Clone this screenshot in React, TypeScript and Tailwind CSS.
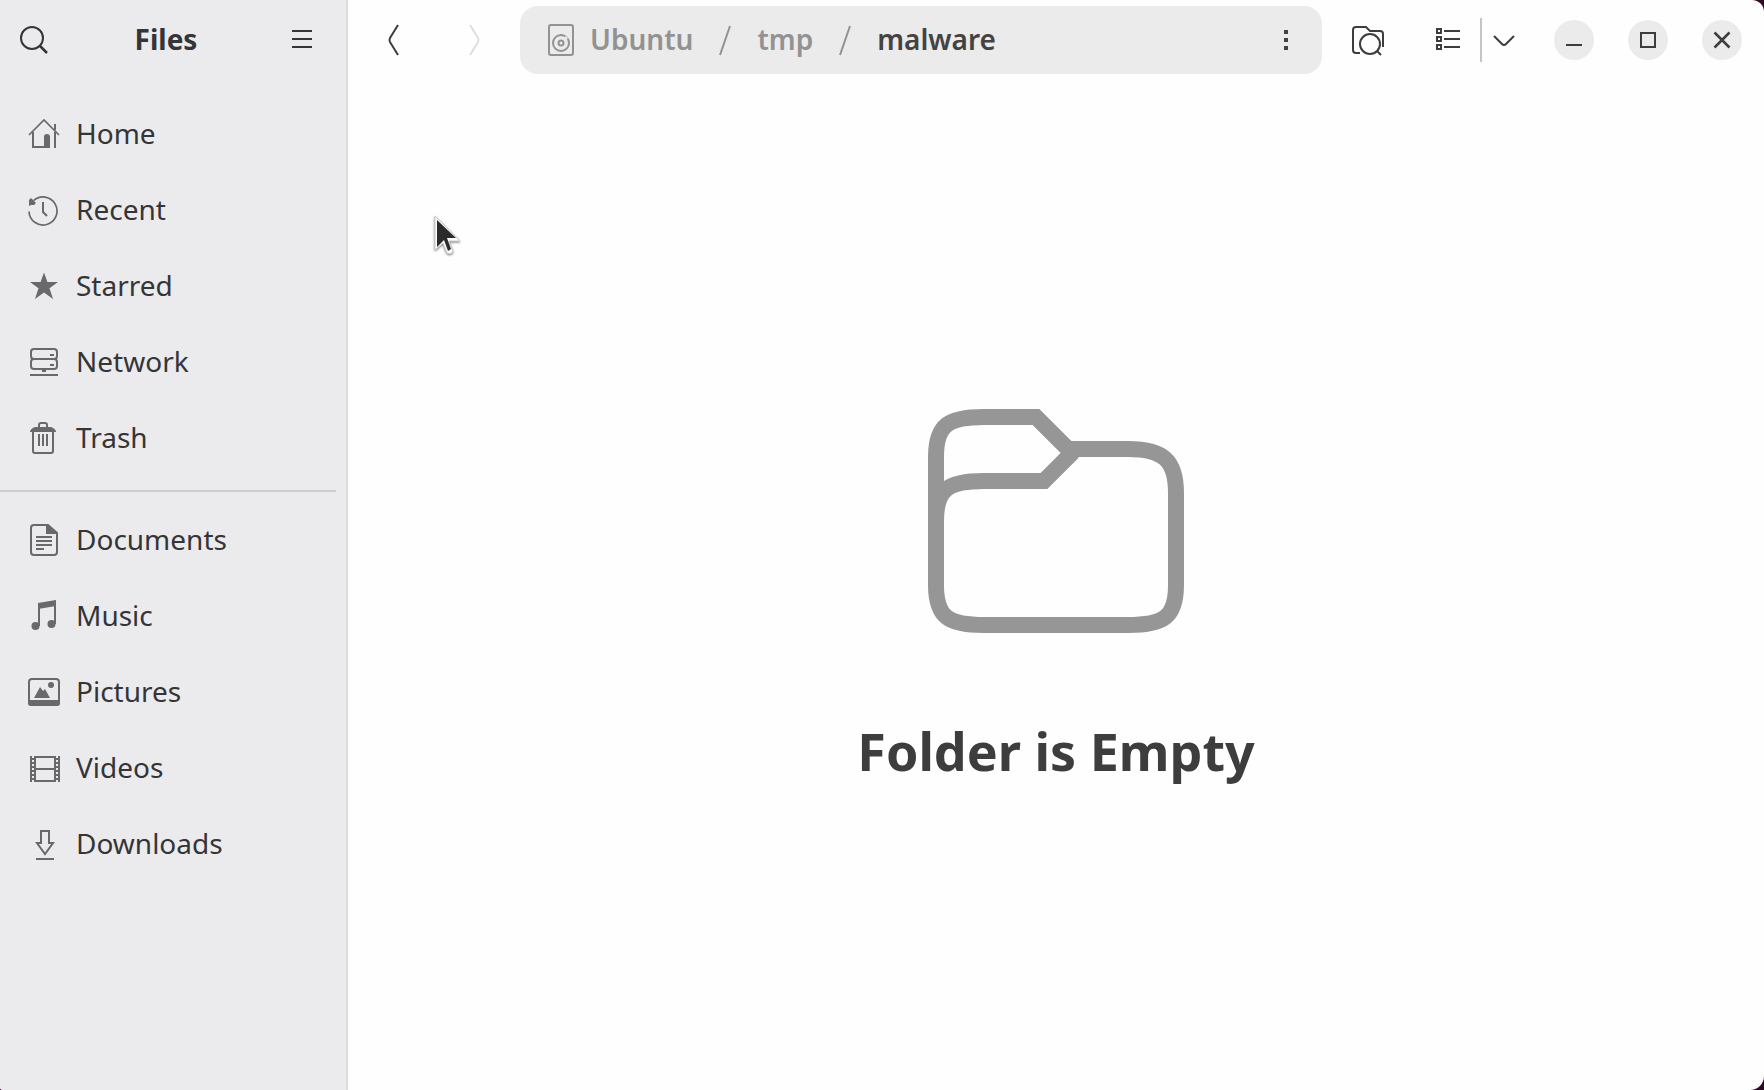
import type { ReactNode } from "react";

type IconProps = { children: ReactNode; className?: string };

function Icon({ children, className = "" }: IconProps) {
  return (
    <svg
      viewBox="0 0 32 32"
      width="32"
      height="32"
      fill="none"
      stroke="currentColor"
      strokeWidth="2"
      aria-hidden="true"
      className={`shrink-0 ${className}`}
    >
      {children}
    </svg>
  );
}

const solid = { fill: "currentColor", stroke: "none" };

const places = [
  {
    label: "Home",
    icon: (
      <>
        <path d="M1 17 16 2l15 15" strokeWidth="1.6" />
        <path d="M5 14v15h12M27 14v16M27 6v6" />
        <path d="M16 30V19a3 3 0 0 1 6 0v11z" {...solid} />
      </>
    ),
  },
  {
    label: "Recent",
    icon: (
      <>
        <path d="M1 17.500A14 14 0 1 0 5.500 6.700" strokeWidth="1.7" />
        <path d="M15 8v10l4 4" />
        <path d="M1 12V6l2-2 5 5-2 2H3z" {...solid} />
      </>
    ),
  },
  {
    label: "Starred",
    icon: <path d="M16 2.500 19.400 12H30l-8.500 6.300L25 29l-9-6.500L7 29l3.500-10.700L2 12h10.600z" {...solid} />,
  },
  {
    label: "Network",
    icon: (
      <>
        <rect x="3" y="3" width="26" height="10" rx="3" />
        <rect x="3" y="13" width="26" height="10" rx="3" />
        <path d="M22 9h4M22 19h4M14 25h4M2 29h28" />
      </>
    ),
  },
  {
    label: "Trash",
    icon: (
      <>
        <path d="M11 6V3q0-2 2-2h4q2 0 2 2v3" />
        <path d="M2 10q0-3 5-5h16q5 2 5 5z" {...solid} />
        <path d="M5 10v19q0 2 2 2h16q2 0 2-2V10M11 12v12M15 12v12M19 12v12" />
      </>
    ),
  },
];

const folders = [
  {
    label: "Documents",
    icon: (
      <>
        <path d="M20 1H6Q3 1 3 4v24q0 3 3 3h20q3 0 3-3V9z" />
        <path d="M18 1h3l8 8v1H18z" {...solid} />
        <path d="M8 13h16M8 17h16M8 21h16M8 25h8" />
      </>
    ),
  },
  {
    label: "Music",
    icon: (
      <>
        <path d="M11 26V4M27 24V2" />
        <path d="M10 3 28 0v6L10 9z" {...solid} />
        <circle cx="7.500" cy="26" r="4" {...solid} />
        <circle cx="23.500" cy="24" r="4" {...solid} />
      </>
    ),
  },
  {
    label: "Pictures",
    icon: (
      <>
        <rect x="1" y="3" width="30" height="26" rx="3" />
        <path d="M0 24h32v3q0 3-3 3H3q-3 0-3-3z" {...solid} />
        <path d="M6 22l6-11 3 4 2-2 5 9z" {...solid} />
        <circle cx="23" cy="9" r="3" {...solid} />
      </>
    ),
  },
  {
    label: "Videos",
    icon: (
      <>
        <path d="M3 4v26M7 4v26M27 4v26M31 4v26M6 5h22M6 17h22M6 29h22" />
        <path d="M5 6v24M29 6v24" strokeDasharray="2 2" />
      </>
    ),
  },
  {
    label: "Downloads",
    icon: <path d="M13 3h8v12h4l-8 11-8-11h4zM8 31h18" />,
  },
];

function PlaceList({ items }: { items: typeof places }) {
  return (
    <ul>
      {items.map(({ label, icon }) => (
        <li key={label}>
          <a href="#" className="flex h-19 items-center gap-4 pl-7 text-[28px]">
            <Icon className="text-[#69696b]">{icon}</Icon>
            <span className="pb-0.5">{label}</span>
          </a>
        </li>
      ))}
    </ul>
  );
}

function Sidebar() {
  return (
    <aside className="w-[348px] shrink-0 border-r-2 border-[#dbdbdd] bg-[#ebebed] text-[#353537]">
      <header className="flex h-20 items-center justify-between pr-7 pl-4">
        <button aria-label="Search">
          <Icon>
            <circle cx="16" cy="14" r="11" />
            <path d="m24 22 7 7" strokeWidth="2.500" />
          </Icon>
        </button>
        <h1 className="pr-0.5 pb-0.5 text-[28px] font-bold">Files</h1>
        <button aria-label="Main menu">
          <Icon>
            <path d="M6 7h20M6 15h20M6 23h20" />
          </Icon>
        </button>
      </header>
      <nav aria-label="Places" className="pt-4">
        <PlaceList items={places} />
        <hr className="mt-3.5 mr-2.5 mb-2.5 border-t-2 border-[#cdcdcf]" />
        <PlaceList items={folders} />
      </nav>
    </aside>
  );
}

function Slash() {
  return (
    <svg
      viewBox="0 0 12 32"
      width="12"
      height="32"
      fill="none"
      stroke="currentColor"
      strokeWidth="2"
      aria-hidden="true"
      className="mx-[26px] shrink-0"
    >
      <path d="M1 31 11 2" />
    </svg>
  );
}

function PathBar() {
  return (
    <nav
      aria-label="Location"
      className="flex h-17 flex-1 items-center rounded-[18px] bg-[#ebebeb] pr-5 pl-6 text-[28px] font-semibold text-[#929292]"
    >
      <a href="#" className="flex items-center gap-3.5">
        <Icon>
          <rect x="5" y="1" width="24" height="30" rx="2" />
          <circle cx="17" cy="19" r="8" />
          <circle cx="17" cy="19" r="2.500" />
          <path d="m20 16 3-3" strokeWidth="3" stroke="#ebebeb" />
        </Icon>
        <span className="pb-0.5">Ubuntu</span>
      </a>
      <Slash />
      <a href="#" className="pb-0.5">
        tmp
      </a>
      <Slash />
      <a href="#" aria-current="page" className="pb-0.5 text-[#434343]">
        malware
      </a>
      <button aria-label="Folder menu" className="ml-auto text-[#434343]">
        <Icon>
          <path d="M14 6h4v4h-4zM14 14h4v4h-4zM14 22h4v4h-4z" {...solid} />
        </Icon>
      </button>
    </nav>
  );
}

function WindowButton({ label, children }: { label: string; children: ReactNode }) {
  return (
    <button aria-label={label} className="flex size-10 items-center justify-center rounded-full bg-[#ebebeb]">
      <Icon>{children}</Icon>
    </button>
  );
}

function HeaderBar() {
  return (
    <header className="flex h-20 items-center pr-[22px] pl-7 text-[#3d3d3d]">
      <div className="flex items-center gap-[50px] pr-[30px]">
        <button aria-label="Back">
          <Icon>
            <path d="M22 1 14 14q-1 2 0 4l8 13" />
          </Icon>
        </button>
        <button aria-label="Forward" disabled className="text-[#dedede]">
          <Icon>
            <path d="m12 1 8 13q1 2 0 4l-8 13" />
          </Icon>
        </button>
      </div>
      <PathBar />
      <button aria-label="Search current folder" className="ml-[30px]">
        <Icon>
          <path d="M8 29H4q-3 0-3-3V6q0-3 3-3h10l4 4h10q3 0 3 3v13" />
          <circle cx="18" cy="20" r="10" />
          <path d="m25 27 4 4" />
        </Icon>
      </button>
      <button aria-label="List view" className="ml-12">
        <Icon>
          <path d="M5 5h4v4H5zM5 13h4v4H5zM5 21h4v4H5zM12 7h16M12 15h16M12 23h16" />
        </Icon>
      </button>
      <span className="ml-4 h-11 w-0.5 bg-[#c6c6c6]" />
      <button aria-label="View options" className="ml-1.5">
        <Icon>
          <path d="m6 12 8 8q2 2 4 0l8-8" />
        </Icon>
      </button>
      <div className="ml-[34px] flex gap-[34px]">
        <WindowButton label="Minimize">
          <path d="M8 21h16" />
        </WindowButton>
        <WindowButton label="Maximize">
          <path d="M9 9h14v14H9z" />
        </WindowButton>
        <WindowButton label="Close">
          <path d="m8.500 8.500 15 15M23.500 8.500l-15 15" strokeWidth="2.500" />
        </WindowButton>
      </div>
    </header>
  );
}

function EmptyFolder() {
  return (
    <section className="flex flex-1 flex-col items-center justify-center gap-19">
      <svg viewBox="0 0 256 256" width="256" height="256" fill="none" stroke="#969696" strokeWidth="16" aria-hidden="true">
        <path d="M8 64C8 32 20 24 56 24h52l32 32h60c36 0 48 12 48 44v92c0 32-12 40-48 40H56c-36 0-48-8-48-40V64M8 128c0-32 12-40 48-40h60l29-29" />
      </svg>
      <h2 className="text-[52px] leading-none font-bold text-[#3d3d3d]">Folder is Empty</h2>
    </section>
  );
}

function Pointer() {
  return (
    <svg
      viewBox="0 0 30 44"
      width="30"
      height="44"
      aria-hidden="true"
      className="pointer-events-none absolute top-[214px] left-[433px] drop-shadow-[0_1px_1px_rgba(0,0,0,0.5)]"
    >
      <path d="M2 2v34l8-7 4 10q3 2 6-1l-4-11h11z" fill="#fff" stroke="#ccc" strokeWidth="1" />
      <path d="M4 6v27l7-7 4 11 3-2-4-11h9z" fill="#2b2b2b" />
    </svg>
  );
}

export default function App() {
  return (
    <div className="min-h-screen bg-[#2c0a24] font-['Noto_Sans',sans-serif]">
      <div className="relative flex min-h-screen overflow-hidden rounded-tr-[12px] rounded-br-[14px] rounded-bl-[3px] bg-[#fefefe]">
        <Sidebar />
        <main className="flex min-w-0 flex-1 flex-col">
          <HeaderBar />
          <EmptyFolder />
        </main>
        <Pointer />
      </div>
    </div>
  );
}
